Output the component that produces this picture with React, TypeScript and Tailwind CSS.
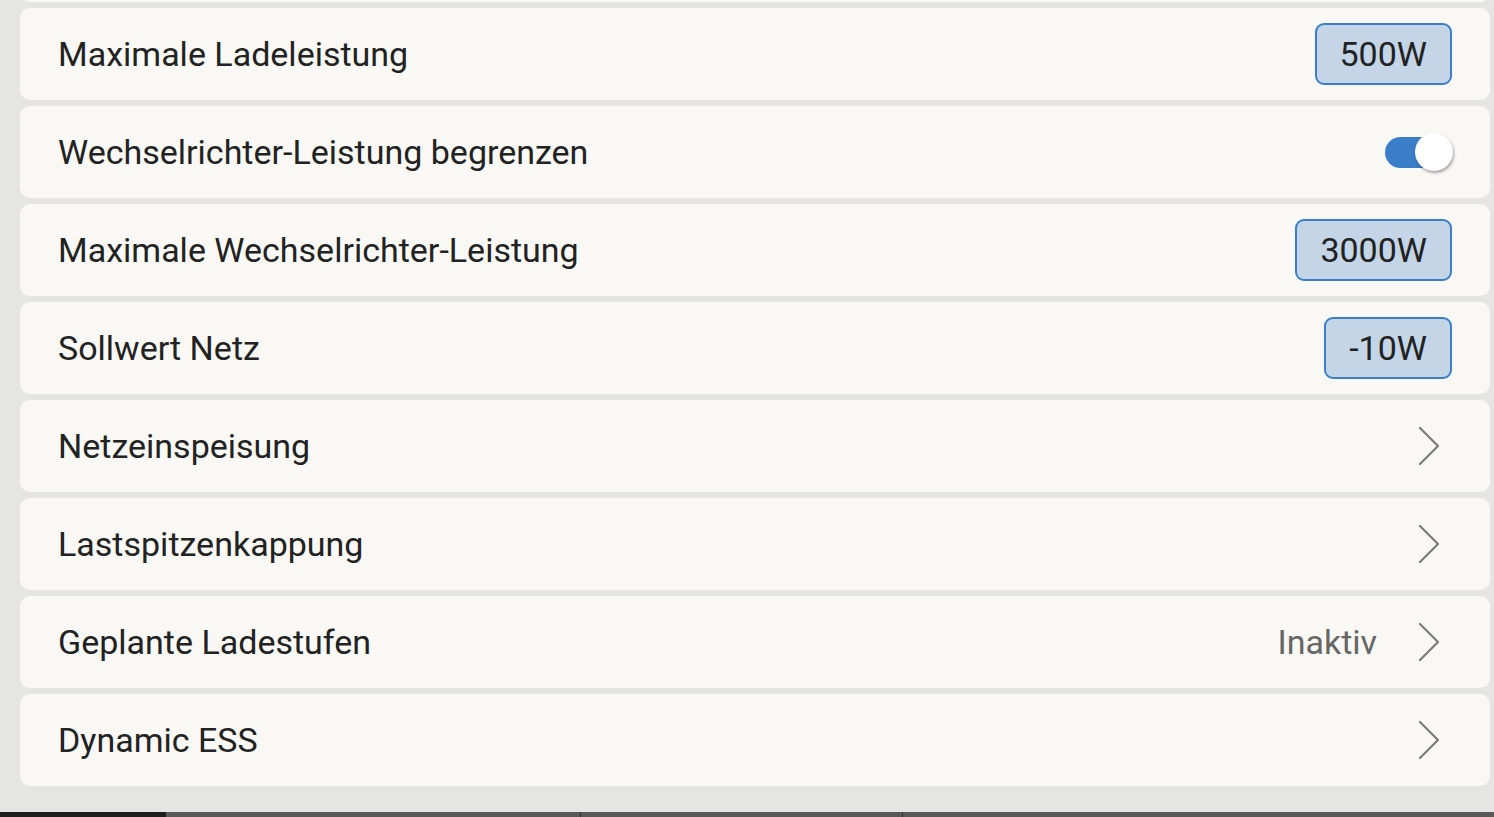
import React from "react";

function Chevron() {
  return (
    <svg width="24" height="40" viewBox="0 0 24 40" className="shrink-0">
      <path d="M3 2 L21 20 L3 38" fill="none" stroke="#7a7a78" strokeWidth="2.2" strokeLinecap="round" strokeLinejoin="round" />
    </svg>
  );
}

function ValueBox({ v }: { v: string }) {
  return (
    <div className="h-[62px] px-[23px] flex items-center justify-center rounded-[9px] border-2 border-[#3a7ec8] bg-[#c3d5e6] text-[34px] text-[#222]">
      {v}
    </div>
  );
}

function Toggle() {
  return (
    <div className="relative w-[70px] h-[40px] shrink-0">
      <div className="absolute left-[1px] top-[5px] w-[56px] h-[31px] rounded-full bg-[#3a7ec8]" />
      <div className="absolute left-[31px] top-[1px] w-[38px] h-[38px] rounded-full bg-white shadow-[1px_2px_3px_rgba(0,0,0,0.35)]" />
    </div>
  );
}

function Row({ label, right }: { label: string; right?: React.ReactNode }) {
  return (
    <div className="h-[92px] shrink-0 rounded-[10px] bg-[#f9f8f5] flex items-center justify-between pl-[38px] pr-[38px]">
      <span className="text-[34px] text-[#222]">{label}</span>
      <div className="flex items-center">{right}</div>
    </div>
  );
}

export default function App() {
  const chev = (
    <div className="mr-[11px]">
      <Chevron />
    </div>
  );
  return (
    <div
      className="w-[1494px] h-[817px] bg-[#e5e5e1] overflow-hidden flex flex-col"
      style={{ fontFamily: "Roboto, 'Noto Sans', sans-serif" }}
    >
      <div className="flex flex-col gap-[6px] pl-[20px] pr-[4px] mt-[-88px]">
        <div className="h-[90px] shrink-0 rounded-[10px] bg-[#f9f8f5]" />
        <Row label="Maximale Ladeleistung" right={<ValueBox v="500W" />} />
        <Row label="Wechselrichter-Leistung begrenzen" right={<div className="mr-[-2px]"><Toggle /></div>} />
        <Row label="Maximale Wechselrichter-Leistung" right={<ValueBox v="3000W" />} />
        <Row label="Sollwert Netz" right={<ValueBox v="-10W" />} />
        <Row label="Netzeinspeisung" right={chev} />
        <Row label="Lastspitzenkappung" right={chev} />
        <Row
          label="Geplante Ladestufen"
          right={
            <>
              <span className="text-[34px] text-[#666664] mr-[40px]">Inaktiv</span>
              {chev}
            </>
          }
        />
        <Row label="Dynamic ESS" right={chev} />
      </div>
      <div className="flex-1" />
      <div className="h-[5px] flex shrink-0">
        <div className="w-[166px] bg-[#1e1e1e]" />
        <div className="w-[415px] bg-[#585858] border-r border-[#333]" />
        <div className="w-[322px] bg-[#585858] border-r border-[#333]" />
        <div className="flex-1 bg-[#585858]" />
      </div>
    </div>
  );
}
